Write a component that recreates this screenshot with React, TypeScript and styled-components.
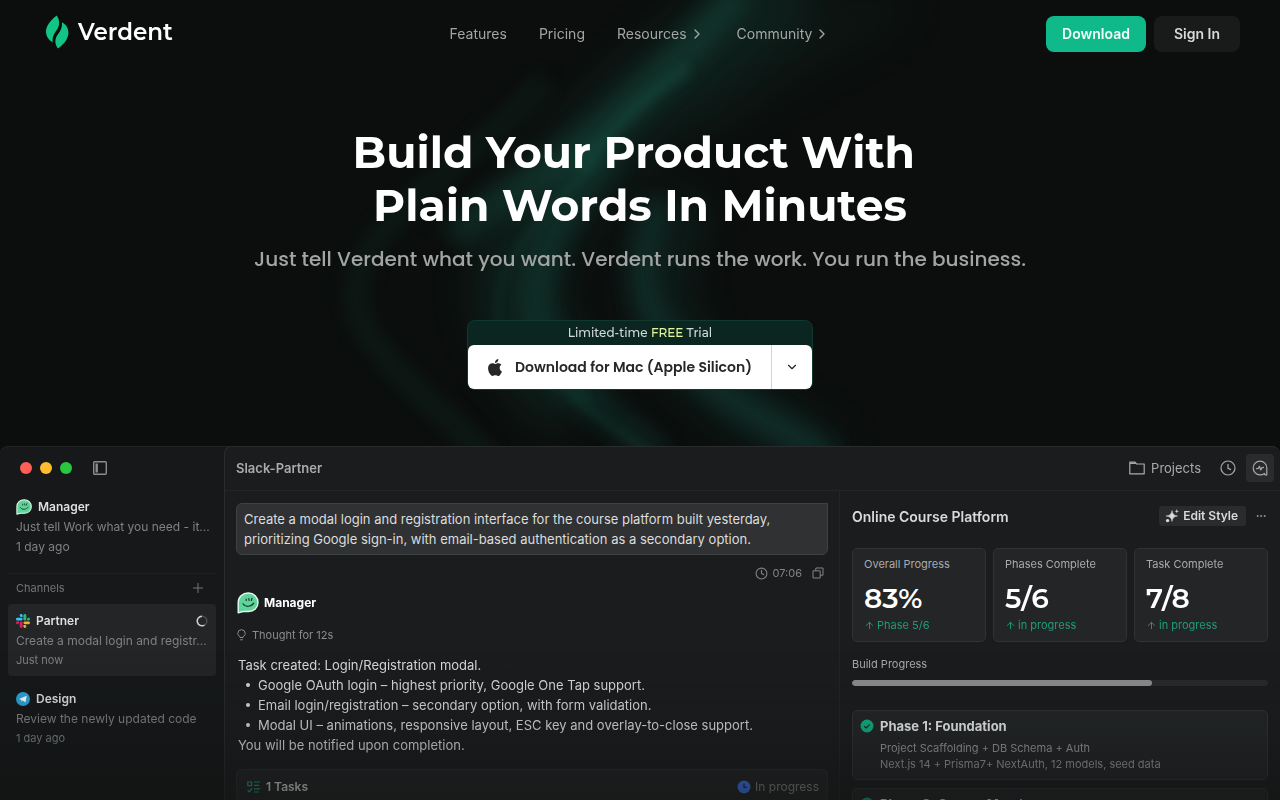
import React from "react";
import styled, { createGlobalStyle, css } from "styled-components";
import { ChevronDown, ChevronRight, Clock, Plus, Ellipsis, ArrowUp } from "lucide-react";

const sans = `Inter, "Liberation Sans", sans-serif`;
const display = `Montserrat, Inter, "Liberation Sans", sans-serif`;
const rounded = `Poppins, Inter, "Liberation Sans", sans-serif`;

const GlobalStyle = createGlobalStyle`
  *, *::before, *::after { box-sizing: border-box; }
  body { margin: 0; background: #0b0e0d; color: #fff; font-family: ${sans}; }
  button { font: inherit; color: inherit; border: 0; padding: 0; background: none; cursor: pointer; }
  a { color: inherit; text-decoration: none; }
  h1, h2, h3, p, ul, dl, dd { margin: 0; padding: 0; }
  svg { display: block; flex: none; }
`;

const Page = styled.div`
  position: relative;
  isolation: isolate;
  height: 100vh;
  overflow: hidden;
  display: flex;
  flex-direction: column;
`;

const Backdrop = styled.svg`
  position: absolute;
  z-index: -1;
  top: 0;
  left: 50%;
  transform: translateX(-50%);
`;

/* ---------- site header ---------- */

const Header = styled.header`
  flex: none;
  display: grid;
  grid-template-columns: 1fr auto 1fr;
  align-items: center;
  height: 68px;
  padding: 0 40px;
`;

const Brand = styled.a`
  display: flex;
  align-items: center;
  gap: 7px;
  padding: 0 5px 5px;
  font: 600 23px/32px ${display};
`;

const Nav = styled.nav`
  display: flex;
  gap: 32px;
  font-size: 14px;
  line-height: 20px;
  color: #a3a5a4;
`;

const NavLink = styled.a`
  display: flex;
  align-items: center;
  gap: 2px;
`;

const Actions = styled.div`
  display: flex;
  justify-content: flex-end;
  gap: 8px;
`;

const ActionButton = styled.button<{ $primary?: boolean }>`
  height: 36px;
  width: ${(p) => (p.$primary ? "100px" : "86px")};
  padding-bottom: 1px;
  border-radius: 8px;
  font-size: 14px;
  font-weight: 600;
  color: ${(p) => (p.$primary ? "#f0fffa" : "#d8d9d9")};
  background: ${(p) => (p.$primary ? "#10b98a" : "#191b1a")};
`;

/* ---------- hero ---------- */

const Hero = styled.section`
  flex: none;
  display: flex;
  flex-direction: column;
  align-items: center;
  padding: 58px 24px 56px;
  text-align: center;
`;

const Title = styled.h1`
  font: 700 44px/53px ${display};
`;

const Subtitle = styled.p`
  margin-top: 12px;
  font: 500 20px/30px ${rounded};
  color: #a2a5a4;
`;

const Offer = styled.div`
  width: 346px;
  margin-top: 46px;
  border: 1px solid #11382f;
  border-radius: 8px;
  background: #0b2620;
`;

const OfferNote = styled.p`
  font: 500 12px/24px ${display};
  color: #d3dbd8;
`;

const Free = styled.span`
  color: #e2f59a;
`;

const SplitButton = styled.div`
  display: flex;
  height: 44px;
  border-radius: 6px;
  background: #fff;
  color: #262727;
`;

const DownloadButton = styled.button`
  flex: 1;
  display: flex;
  align-items: center;
  justify-content: center;
  gap: 12px;
  font: 600 14px/20px ${rounded};
`;

const MoreButton = styled.button`
  width: 41px;
  display: grid;
  place-items: center;
  border-left: 1px solid #d4d4d4;
`;

/* ---------- product window ---------- */

const Window = styled.section`
  position: relative;
  flex: 1;
  min-height: 0;
  display: flex;
  overflow: hidden;
  border-radius: 8px 8px 0 0;
  background: #161819;
  box-shadow: inset 0 1px #222425;
`;

const Fade = styled.div`
  position: absolute;
  inset: auto 0 0;
  height: 150px;
  pointer-events: none;
  background: linear-gradient(rgba(17, 19, 18, 0), rgba(17, 19, 18, 0.16) 50%, rgba(17, 19, 18, 0.56));
`;

const Sidebar = styled.aside`
  flex: none;
  width: 224px;
  padding: 0 8px;
`;

const WindowBar = styled.div`
  display: flex;
  align-items: center;
  gap: 8px;
  height: 44px;
  padding-left: 12px;
`;

const Light = styled.span<{ $color: string }>`
  width: 12px;
  height: 12px;
  border-radius: 50%;
  background: ${(p) => p.$color};
`;

const PanelToggle = styled.button`
  margin-left: 13px;
  color: #8b8d8e;
`;

const Thread = styled.a<{ $active?: boolean }>`
  display: block;
  height: 72px;
  padding: 7px 8px 0;
  border-radius: 4px;
  ${(p) => p.$active && css`background: #232527;`}
  & + & { margin-top: 6px; }
`;

const ThreadName = styled.div`
  display: flex;
  align-items: center;
  gap: 6px;
  font-size: 12px;
  font-weight: 600;
  line-height: 20px;
  color: #dedfdf;
`;

const Spinner = styled.svg`
  margin-left: auto;
`;

const ThreadText = styled.p`
  white-space: nowrap;
  font-size: 12px;
  line-height: 20px;
  color: #7f8183;
`;

const ThreadTime = styled.p<{ $compact?: boolean }>`
  font-size: ${(p) => (p.$compact ? "11px" : "12px")};
  line-height: ${(p) => (p.$compact ? "18px" : "20px")};
  color: #7f8183;
`;

const ChannelBar = styled.div`
  display: flex;
  align-items: center;
  justify-content: space-between;
  height: 31px;
  margin-top: 11px;
  padding: 0 10px 2px 8px;
  border-top: 1px solid #1d1f20;
  font-size: 11px;
  color: #737576;
`;

const Main = styled.div`
  flex: 1;
  min-width: 0;
  display: flex;
  flex-direction: column;
  border: 1px solid #292b2d;
  border-right: 0;
  border-bottom: 0;
  border-radius: 8px 8px 0 0;
  background: #1b1c1e;
`;

const Topbar = styled.div`
  flex: none;
  display: flex;
  align-items: center;
  height: 44px;
  padding: 0 6px 2px 11px;
  border-bottom: 1px solid #222426;
  color: #a9abac;
`;

const TopbarTitle = styled.h2`
  flex: 1;
  font-size: 13px;
  font-weight: 600;
`;

const ProjectsButton = styled.button`
  display: flex;
  align-items: center;
  gap: 6px;
  margin-right: 13px;
  font-size: 13px;
`;

const IconButton = styled.button<{ $active?: boolean }>`
  width: 28px;
  height: 28px;
  display: grid;
  place-items: center;
  border-radius: 4px;
  ${(p) => p.$active && css`margin-left: 4px; background: #292b2d;`}
`;

const Columns = styled.div`
  flex: 1;
  min-height: 0;
  display: flex;
`;

const Chat = styled.section`
  flex: 1;
  min-width: 0;
  padding: 12px 11px;
  font-size: 13px;
  line-height: 20px;
`;

const Prompt = styled.p`
  padding: 5px 7px;
  border: 1px solid #3f4143;
  border-radius: 6px 0 6px 6px;
  background: #303133;
  color: #dcdddd;
`;

const PromptMeta = styled.div`
  display: flex;
  align-items: center;
  justify-content: flex-end;
  gap: 4px;
  height: 20px;
  margin: 8px 4px 0 0;
  font-size: 11px;
  color: #828485;
`;

const CopyButton = styled.button`
  margin-left: 6px;
`;

const Author = styled.h3`
  display: flex;
  align-items: center;
  gap: 5px;
  margin-top: 8px;
  padding-left: 1px;
  font-size: 12px;
  font-weight: 700;
  line-height: 24px;
`;

const Thought = styled.p`
  display: flex;
  align-items: center;
  gap: 6px;
  margin: 10px 0;
  padding-left: 1px;
  font-size: 11px;
  color: #8a8c8d;
`;

const Reply = styled.div`
  padding-left: 2px;
  color: #d9dada;
`;

const ReplyList = styled.ul`
  padding-left: 8px;
  list-style: none;
`;

const ReplyItem = styled.li`
  display: flex;
  align-items: center;
  gap: 8px;
  &::before {
    content: "";
    width: 4px;
    height: 4px;
    border-radius: 50%;
    background: currentColor;
  }
`;

const TaskCard = styled.div`
  display: flex;
  align-items: center;
  gap: 6px;
  height: 44px;
  margin-top: 14px;
  padding: 0 8px 8px 10px;
  border: 1px solid #2b2d2f;
  border-radius: 6px;
  background: #222426;
  color: #d9dada;
  font-size: 12px;
  font-weight: 600;
`;

const TaskStatus = styled.span`
  display: flex;
  align-items: center;
  gap: 4px;
  margin-left: auto;
  font-weight: 400;
  color: #858788;
`;

const Board = styled.section`
  flex: none;
  width: 441px;
  padding: 11px 12px 0;
  border-left: 1px solid #222426;
`;

const BoardHead = styled.div`
  display: flex;
  align-items: center;
  height: 28px;
`;

const BoardTitle = styled.h2`
  flex: 1;
  font-size: 14px;
  font-weight: 600;
  color: #d9dada;
`;

const EditButton = styled.button`
  display: flex;
  align-items: center;
  gap: 4px;
  height: 20px;
  padding: 0 8px 0 6px;
  border-radius: 3px;
  background: #292b2d;
  font-size: 12px;
  font-weight: 600;
  line-height: 20px;
  color: #d9dada;
`;

const MenuButton = styled.button`
  padding: 0 1px 0 9px;
  color: #9a9c9d;
`;

const Stats = styled.dl`
  display: grid;
  grid-template-columns: repeat(3, 1fr);
  gap: 7px;
  margin-top: 18px;
`;

const Stat = styled.div`
  height: 94px;
  padding: 6px 11px;
  border: 1px solid #303234;
  border-radius: 5px;
  background: #232527;
`;

const StatLabel = styled.dt`
  font-size: 11px;
  line-height: 18px;
  color: #a9abac;
`;

const StatValue = styled.dd`
  margin-top: 8px;
  font: 600 28px/34px ${display};
`;

const StatNote = styled.dd`
  display: flex;
  align-items: center;
  gap: 2px;
  font-size: 11px;
  line-height: 20px;
  color: #219c79;
`;

const Progress = styled.label`
  display: block;
  margin-top: 13px;
  font-size: 11px;
  line-height: 18px;
  color: #a9abac;
`;

const Meter = styled.progress`
  appearance: none;
  display: block;
  width: 100%;
  height: 6px;
  margin-top: 7px;
  border: 0;
  border-radius: 3px;
  overflow: hidden;
  background: #282a2c;
  &::-webkit-progress-bar { background: #282a2c; }
  &::-webkit-progress-value { border-radius: 3px; background: #8e8f91; }
`;

const Phase = styled.article`
  display: flex;
  gap: 6px;
  margin-top: 8px;
  padding: 5px 7px 7px;
  height: 70px;
  border: 1px solid #303234;
  border-radius: 5px;
  background: #232527;
  font-size: 11px;
  line-height: 16px;
  color: #9b9d9e;
  > svg { margin-top: 3px; }
  ${Progress} + & { margin-top: 24px; }
`;

const PhaseTitle = styled.h3`
  margin-bottom: 4px;
  font-size: 13px;
  font-weight: 700;
  line-height: 20px;
  color: #eceded;
`;

/* ---------- drawings ---------- */

const Waves = () => (
  <Backdrop width="1280" height="450" viewBox="0 0 1280 450" fill="none" aria-hidden="true">
    <defs>
      <filter id="soft" x="-30%" y="-30%" width="160%" height="160%" colorInterpolationFilters="sRGB"><feGaussianBlur stdDeviation="10" /></filter>
      <filter id="softer" x="-40%" y="-40%" width="180%" height="180%" colorInterpolationFilters="sRGB"><feGaussianBlur stdDeviation="22" /></filter>
      <filter id="fine" x="-30%" y="-30%" width="160%" height="160%" colorInterpolationFilters="sRGB"><feGaussianBlur stdDeviation="5" /></filter>
    </defs>
    <g stroke="#185c4c" filter="url(#softer)">
      <path d="M800-20C700 50 620 110 560 190S500 330 580 400" strokeWidth="80" opacity=".24" />
      <path d="M690 200C640 270 650 320 700 370S790 430 830 470" strokeWidth="50" opacity=".22" />
      <path d="M900 0C820 40 760 70 700 130" strokeWidth="50" opacity=".08" />
    </g>
    <g stroke="#1a6b59" filter="url(#soft)">
      <path d="M740-10C700 40 650 90 590 140S480 200 455 240" strokeWidth="32" opacity=".26" />
      <path d="M610 150C560 210 530 260 540 320S600 400 660 460" strokeWidth="34" opacity=".2" />
      <path d="M545 80C500 140 390 200 362 265S400 370 490 460" strokeWidth="18" opacity=".15" />
      <path d="M660 200C630 260 635 310 690 365S780 420 830 460" strokeWidth="28" opacity=".22" />
    </g>
    <g stroke="#1f8069" filter="url(#fine)">
      <path d="M690 68C650 90 610 130 580 170" strokeWidth="14" opacity=".14" />
      <path d="M600 160C570 190 480 260 500 330S550 370 590 400" strokeWidth="5" opacity=".14" />
      <path d="M570 395C600 420 630 440 660 460" strokeWidth="5" opacity=".16" />
    </g>
  </Backdrop>
);

const LeafLogo = () => (
  <svg width="26" height="34" viewBox="0 0 26 34" fill="#12c486" aria-hidden="true">
    <path d="M11.800 0.400C5.400 5.200 1 10.800 1 16.600C1 21 3.400 25 7.600 27.400C7.200 22.600 8.400 19.600 11.200 15.800C14.400 11.600 15.600 6.400 11.800 0.400Z" />
    <path d="M17 7.200C17.400 12.400 15.800 15.600 13 19.200C9.800 23.400 9.200 28.600 13 33.400C19.600 28.800 23.400 23.200 23.400 17.400C23.400 13.200 21 9.400 17 7.200Z" />
  </svg>
);

const AppleLogo = () => (
  <svg width="16" height="17" viewBox="0 0 814 1000" fill="#262727" aria-hidden="true">
    <path d="M788 341c-6 4.500-108 62-108 190 0 148 130 200 134 202-1 3-21 72-69 142-43 62-88 124-156 124s-86-40-165-40c-77 0-104 41-166 41s-106-57-156-127C44 791 0 665 0 545 0 351 126 248 251 248c66 0 121 43 162 43 39 0 101-46 176-46 29 0 131 3 199 96zM555 160c31-37 53-88 53-139 0-7-1-14-2-20-51 2-111 34-147 76-29 32-55 83-55 135 0 8 1 16 2 18 3 1 8 1 14 1 45 0 103-30 135-71z" />
  </svg>
);

const Mascot = ({ size }: { size: number }) => (
  <svg width={size} height={size} viewBox="0 0 22 22" aria-hidden="true">
    <path d="M1.200 20.800V10.500C1.200 5 5.500 1 11.200 1S21 5 21 10.500 17 19.500 11.500 19.500H6.500C4.500 19.500 3 20.800 1.200 20.800Z" fill="#5fd39a" stroke="#e6fbef" strokeWidth="1.400" strokeLinejoin="round" />
    <path d="M6 11.800c2 3.400 8 3.400 10.800-.6M9.200 7v1.400M11.800 6.600l.3 1.800M15 6.300l-.7 2.200" fill="none" stroke="#123d2a" strokeWidth="1.200" strokeLinecap="round" />
  </svg>
);

const SlackLogo = () => (
  <svg width="14" height="14" viewBox="0 0 24 24" aria-hidden="true">
    <path fill="#e01e5a" d="M5 15.200a2.500 2.500 0 1 1-2.500-2.600H5zM6.300 15.200a2.500 2.500 0 0 1 5 0v6.300a2.500 2.500 0 1 1-5 0z" />
    <path fill="#36c5f0" d="M8.800 5a2.500 2.500 0 1 1 2.500-2.500V5zM8.800 6.300a2.500 2.500 0 0 1 0 5H2.500a2.500 2.500 0 1 1 0-5z" />
    <path fill="#2eb67d" d="M19 8.800a2.500 2.500 0 1 1 2.500 2.500H19zM17.700 8.800a2.500 2.500 0 0 1-5 0V2.500a2.500 2.500 0 1 1 5 0z" />
    <path fill="#ecb22e" d="M15.200 19a2.500 2.500 0 1 1-2.500 2.500V19zM15.200 17.700a2.500 2.500 0 0 1 0-5h6.300a2.500 2.500 0 1 1 0 5z" />
  </svg>
);

const TelegramLogo = () => (
  <svg width="14" height="14" viewBox="0 0 24 24" aria-hidden="true">
    <circle cx="12" cy="12" r="12" fill="#2ba3dc" />
    <path d="M5 11.800 18.500 6.300 16.200 18 11.700 14.600 9.500 16.800 9.200 13.400Z" fill="#fff" />
  </svg>
);

const PanelIcon = () => (
  <svg width="14" height="14" viewBox="0 0 14 14" fill="none" stroke="currentColor" aria-hidden="true">
    <rect x=".7" y=".7" width="12.600" height="12.600" rx="1" strokeWidth="1.400" />
    <path d="M3.700 2.500v9" strokeWidth="2.400" />
  </svg>
);

const FolderIcon = () => (
  <svg width="16" height="14" viewBox="0 0 16 14" fill="none" stroke="currentColor" strokeWidth="1.200" aria-hidden="true">
    <path d="M.8 12.800V1.200H6L7.500 3H15.200V12.800Z" strokeLinejoin="round" />
    <path d="M1 2.400h5.800" />
  </svg>
);

const HistoryIcon = () => (
  <svg width="16" height="16" viewBox="0 0 16 16" fill="none" stroke="currentColor" strokeWidth="1.200" aria-hidden="true">
    <circle cx="8" cy="8" r="7" />
    <path d="M8 4V8.400L11 9.600" />
  </svg>
);

const PulseIcon = () => (
  <svg width="16" height="16" viewBox="0 0 16 16" fill="none" stroke="currentColor" strokeWidth="1.200" strokeLinecap="round" strokeLinejoin="round" aria-hidden="true">
    <path d="M8 14.800A6.800 6.800 0 1 1 14.800 8V14.800H13L12.400 13.400A6.800 6.800 0 0 1 8 14.800Z" />
    <path d="M4.500 8.700 6.400 8.300 7.400 6.200 8.800 10 9.800 7.800 11.500 7.400" />
  </svg>
);

const SparkleIcon = () => (
  <svg width="14" height="14" viewBox="0 0 14 14" fill="currentColor" aria-hidden="true">
    <path d="M7 1.500C7.500 5 8.800 6.400 12.500 7C8.800 7.600 7.500 9 7 12.500C6.500 9 5.200 7.600 1 7C5.200 6.400 6.500 5 7 1.500Z" stroke="currentColor" strokeWidth=".5" />
    <path d="M11.800 0 12.300 1.700 14 2.200 12.300 2.700 11.800 4.400 11.300 2.700 9.600 2.200 11.300 1.700Z" />
    <circle cx="2.600" cy="11.600" r="1.700" />
  </svg>
);

const CopyIcon = () => (
  <svg width="12" height="12" viewBox="0 0 12 12" fill="none" stroke="currentColor" aria-hidden="true">
    <path d="M1 3.800H8.200V11H1ZM3.800 3.800V1H11V8.200H8.200" />
  </svg>
);

const BulbIcon = () => (
  <svg width="9" height="12" viewBox="0 0 9 12" fill="none" stroke="currentColor" aria-hidden="true">
    <path d="M3 8.500V7.600C1.500 6.900 .8 5.800.8 4.400A3.700 3.700 0 0 1 8.200 4.400C8.200 5.800 7.500 6.900 6 7.600V8.500ZM3.200 10.800H5.800" />
  </svg>
);

const TasksIcon = () => (
  <svg width="13" height="12" viewBox="0 0 13 12" fill="none" stroke="#1fa57c" strokeWidth="1.200" aria-hidden="true">
    <path d="M.8 1H4.600V4.600H.8ZM7 1H13M7 4.400H12M.6 9 2.300 10.800 5.200 7.200M7 7.800H13M7 11H12" />
  </svg>
);

const ClockBadge = () => (
  <svg width="14" height="14" viewBox="0 0 14 14" aria-hidden="true">
    <circle cx="7" cy="7" r="6.500" fill="#3f78f5" />
    <path d="M7 3.500V7.400H9.800" fill="none" stroke="#1b2a52" strokeWidth="1.300" />
  </svg>
);

const CheckBadge = () => (
  <svg width="14" height="14" viewBox="0 0 14 14" aria-hidden="true">
    <circle cx="7" cy="7" r="6.500" fill="#10b183" />
    <path d="M4.200 7.200 6.200 9 9.800 5.300" fill="none" stroke="#1d2a26" strokeWidth="1.200" />
  </svg>
);

const stats = [
  { label: "Overall Progress", value: "83%", note: "Phase 5/6" },
  { label: "Phases Complete", value: "5/6", note: "in progress" },
  { label: "Task Complete", value: "7/8", note: "in progress" },
];

export default function App() {
  return (
    <>
      <GlobalStyle />
      <Page>
        <Waves />
        <Header>
          <Brand href="#"><LeafLogo />Verdent</Brand>
          <Nav>
            <NavLink href="#features">Features</NavLink>
            <NavLink href="#pricing">Pricing</NavLink>
            <NavLink href="#resources">Resources<ChevronRight size={16} /></NavLink>
            <NavLink href="#community">Community<ChevronRight size={16} /></NavLink>
          </Nav>
          <Actions>
            <ActionButton $primary>Download</ActionButton>
            <ActionButton>Sign In</ActionButton>
          </Actions>
        </Header>

        <Hero>
          <Title>Build Your Product With&nbsp;<br />Plain Words In Minutes</Title>
          <Subtitle>Just tell Verdent what you want. Verdent runs the work. You run the business.</Subtitle>
          <Offer>
            <OfferNote>Limited-time <Free>FREE</Free> Trial</OfferNote>
            <SplitButton>
              <DownloadButton><AppleLogo />Download for Mac (Apple Silicon)</DownloadButton>
              <MoreButton aria-label="More downloads"><ChevronDown size={14} /></MoreButton>
            </SplitButton>
          </Offer>
        </Hero>

        <Window>
          <Sidebar>
            <WindowBar>
              <Light $color="#ff5f57" /><Light $color="#febc2e" /><Light $color="#28c840" />
              <PanelToggle aria-label="Toggle sidebar"><PanelIcon /></PanelToggle>
            </WindowBar>
            <Thread href="#manager">
              <ThreadName><Mascot size={16} />Manager</ThreadName>
              <ThreadText>Just tell Work what you need - it...</ThreadText>
              <ThreadTime>1 day ago</ThreadTime>
            </Thread>
            <ChannelBar>Channels<button aria-label="Add channel"><Plus size={16} strokeWidth={1.5} /></button></ChannelBar>
            <Thread href="#partner" $active>
              <ThreadName>
                <SlackLogo />Partner
                <Spinner width="12" height="12" viewBox="0 0 12 12" fill="none" strokeWidth="1.500" aria-hidden="true">
                  <circle cx="6" cy="6" r="4.800" stroke="#4a4c4f" />
                  <path d="M8.400 10.200A4.800 4.800 0 1 1 6 1.200" stroke="#d0d1d2" />
                </Spinner>
              </ThreadName>
              <ThreadText>Create a modal login and registr...</ThreadText>
              <ThreadTime $compact>Just now</ThreadTime>
            </Thread>
            <Thread href="#design">
              <ThreadName><TelegramLogo />Design</ThreadName>
              <ThreadText>Review the newly updated code</ThreadText>
              <ThreadTime $compact>1 day ago</ThreadTime>
            </Thread>
          </Sidebar>

          <Main>
            <Topbar>
              <TopbarTitle>Slack-Partner</TopbarTitle>
              <ProjectsButton><FolderIcon />Projects</ProjectsButton>
              <IconButton aria-label="History"><HistoryIcon /></IconButton>
              <IconButton aria-label="Activity" $active><PulseIcon /></IconButton>
            </Topbar>
            <Columns>
              <Chat>
                <Prompt>Create a modal login and registration interface for the course platform built yesterday, prioritizing Google sign-in, with email-based authentication as a secondary option.</Prompt>
                <PromptMeta>
                  <Clock size={13} />07:06
                  <CopyButton aria-label="Copy"><CopyIcon /></CopyButton>
                </PromptMeta>
                <Author><Mascot size={22} />Manager</Author>
                <Thought><BulbIcon />Thought for 12s</Thought>
                <Reply>
                  <p>Task created: Login/Registration modal.</p>
                  <ReplyList>
                    <ReplyItem>Google OAuth login – highest priority, Google One Tap support.</ReplyItem>
                    <ReplyItem>Email login/registration – secondary option, with form validation.</ReplyItem>
                    <ReplyItem>Modal UI – animations, responsive layout, ESC key and overlay-to-close support.</ReplyItem>
                  </ReplyList>
                  <p>You will be notified upon completion.</p>
                </Reply>
                <TaskCard>
                  <TasksIcon />1 Tasks
                  <TaskStatus><ClockBadge />In progress</TaskStatus>
                </TaskCard>
              </Chat>

              <Board>
                <BoardHead>
                  <BoardTitle>Online Course Platform</BoardTitle>
                  <EditButton><SparkleIcon />Edit Style</EditButton>
                  <MenuButton aria-label="More options"><Ellipsis size={12} /></MenuButton>
                </BoardHead>
                <Stats>
                  {stats.map((s) => (
                    <Stat key={s.label}>
                      <StatLabel>{s.label}</StatLabel>
                      <StatValue>{s.value}</StatValue>
                      <StatNote><ArrowUp size={11} />{s.note}</StatNote>
                    </Stat>
                  ))}
                </Stats>
                <Progress>
                  Build Progress
                  <Meter value={72} max={100} />
                </Progress>
                <Phase>
                  <CheckBadge />
                  <div>
                    <PhaseTitle>Phase 1: Foundation</PhaseTitle>
                    <p>Project Scaffolding + DB Schema + Auth</p>
                    <p>Next.js 14 + Prisma7+ NextAuth, 12 models, seed data</p>
                  </div>
                </Phase>
                <Phase>
                  <CheckBadge />
                  <div>
                    <PhaseTitle>Phase 2: Course Mgmt</PhaseTitle>
                  </div>
                </Phase>
              </Board>
            </Columns>
          </Main>
          <Fade />
        </Window>
      </Page>
    </>
  );
}
